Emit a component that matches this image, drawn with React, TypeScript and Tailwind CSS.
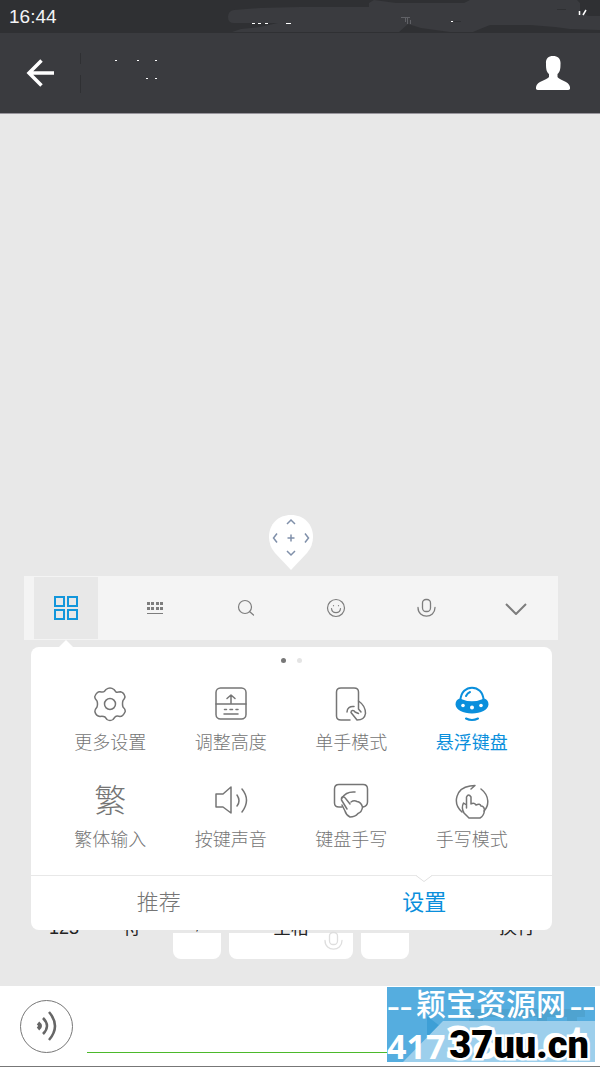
import React, { useState } from 'react';

interface IconProps {
  className?: string;
}

const stroke = {
  fill: 'none',
  stroke: 'currentColor',
  strokeWidth: 1.5,
  strokeLinecap: 'round' as const,
  strokeLinejoin: 'round' as const,
};

const GridIcon = () => (
  <svg className="h-6 w-6" viewBox="0 0 24 24" fill="none" stroke="currentColor" strokeWidth={2}>
    <path d="M1 1h9v9H1zM14 1h9v9h-9zM1 14h9v9H1zM14 14h9v9h-9z" />
  </svg>
);

const KeyboardIcon = () => (
  <svg className="h-6 w-6" viewBox="0 0 24 24" fill="currentColor">
    <path d="M3 6h3v3H3zM7 6h3v3H7zM12 6h3v3h-3zM16 6h3v3h-3zM3 11h3v3H3zM7 11h3v3H7zM12 11h3v3h-3zM16 11h3v3h-3zM3 17h16v1H3z" />
  </svg>
);

const SearchIcon = () => (
  <svg className="h-6 w-6" viewBox="0 0 24 24" {...stroke} strokeWidth={1.2}>
    <circle cx="11" cy="11" r="6.5" />
    <path d="m15.5 15.5 4 3.5" />
  </svg>
);

const SmileIcon = () => (
  <svg className="h-6 w-6" viewBox="0 0 24 24" {...stroke} strokeWidth={1.2}>
    <circle cx="12" cy="12" r="8.5" />
    <path d="M7.5 12.500c.5 5.500 8.500 5.500 9 0" />
    <path d="M9.500 9.500v.2M14.500 9.500v.2" />
  </svg>
);

const MicIcon = ({ className = 'h-6 w-6' }: IconProps) => (
  <svg className={className} viewBox="0 0 24 24" {...stroke} strokeWidth={1.3}>
    <rect x="8.5" y="3.5" width="8" height="12" rx="3.5" />
    <path d="M4 11.500C4 23 21 23 21 11.500" />
  </svg>
);

const ChevronIcon = () => (
  <svg className="h-6 w-6" viewBox="0 0 24 24" {...stroke} strokeWidth={2} strokeLinecap="butt">
    <path d="m2 8 10 10L22 8" />
  </svg>
);

const GearIcon = () => (
  <svg className="h-9 w-9" viewBox="0 0 36 36" {...stroke}>
    <path d="M14 3.500Q18 .500 22 3.500L24 6Q25 6.500 28.500 5.800Q32 6.500 33 11Q32.500 13 31 14.500Q30 18 31 21Q34 24 33 26Q31 30.500 28 30.500Q24.500 29.500 23 31L21 33.500Q18 35.500 15 33.500L13 31Q11 30 8 30.500Q4 30 3 26Q2.500 24 5 21Q6 18 5 15Q2 12 3 10Q5 5.500 8 5.800Q11.500 6.500 12.500 5.200Z" />
    <circle cx="18" cy="18" r="5.500" />
  </svg>
);

const HeightIcon = () => (
  <svg className="h-9 w-9" viewBox="0 0 36 36" {...stroke}>
    <rect x="3" y="2" width="30" height="31" rx="4.500" />
    <path d="M3 18h30M18 17V9M14 12.500 18 9l4 3.500" />
    <path d="M11.500 23.500h2M17 23.500h2.500M23 23.500h2M11 28h14" />
  </svg>
);

const OneHandIcon = () => (
  <svg className="h-9 w-9" viewBox="0 0 36 36" {...stroke}>
    <path d="M17 34H8Q3.500 34 3.500 30V6Q3.500 2 8 2H21Q25.500 2 25.500 6V15C30 18 32.500 23 32.500 27.500C32 31 30 34 24 34L18 26.500C18 24 21 24 22 26L25.500 27.500" />
    <path d="M14 26C14 22 17 20 21 20.500M25.500 15V23L28 26" />
  </svg>
);

const UfoIcon = () => (
  <svg className="h-9 w-9" viewBox="0 0 36 36">
    <path d="M6.500 14C7 -2.500 29 -2.500 29.500 14" {...stroke} strokeWidth={2} />
    <path d="M12 10Q13.500 7 16 6" {...stroke} strokeWidth={2} />
    <path d="M5.500 12.500Q1.500 14 1.500 18.500C2 24 9 27.500 18 27.500S34 24 34.500 18.500Q34.500 14 30.500 12.500Q18 18 5.500 12.500Z" fill="currentColor" />
    <g fill="white">
      <circle cx="9" cy="19.500" r="1.800" />
      <circle cx="18" cy="21.500" r="2" />
      <circle cx="27" cy="19.500" r="1.800" />
    </g>
    <path d="M12 32.500Q18 35.500 24 32.500" {...stroke} strokeWidth={2} />
  </svg>
);

const TraditionalIcon = () => <span className="h-9 text-[32px] leading-9">繁</span>;

const SoundIcon = () => (
  <svg className="h-9 w-9" viewBox="0 0 36 36" {...stroke}>
    <path d="M3 11h7l8-7v26l-8-6H3z" />
    <path d="M24 12Q28 18 24 23M29 6Q38 17 29 29" />
  </svg>
);

const HandwriteIcon = () => (
  <svg className="h-9 w-9" viewBox="0 0 36 36" {...stroke}>
    <path d="M9 24H6Q1.500 24 1.500 20V6Q1.500 1.500 6 1.500H30Q34.500 1.500 34.500 6V19Q34.500 23 30 24" />
    <path d="M9 15C12 10 16 8.500 22 9" />
    <path d="M14 26 8.500 17C8 13 11 12.500 13 16L17 21M18 19Q21 17 24 18.500Q28 19 29.500 24Q29 29 25 30.500Q22 34 17 34Q13 32 12 28L9 22" />
  </svg>
);

const HandModeIcon = () => (
  <svg className="h-9 w-9" viewBox="0 0 36 36" {...stroke}>
    <path d="M8 29C-2 20 2 5 16 3L21 2.500 17 6M27 6C36 13 35 23 30 28" />
    <path d="M12.500 25V14Q14.500 10 17 14V21Q20 19 22 22Q26 20 27 23Q30 23 30.500 27Q30 33 26 35H15L10 30Q7 25 9.500 20L12.500 22" />
  </svg>
);

const tools = [
  { id: 'menu', label: '菜单', Icon: GridIcon },
  { id: 'keyboard', label: '键盘', Icon: KeyboardIcon },
  { id: 'search', label: '搜索', Icon: SearchIcon },
  { id: 'emoji', label: '表情', Icon: SmileIcon },
  { id: 'voice', label: '语音', Icon: MicIcon },
  { id: 'hide', label: '收起', Icon: ChevronIcon },
];

const options = [
  { label: '更多设置', Icon: GearIcon },
  { label: '调整高度', Icon: HeightIcon },
  { label: '单手模式', Icon: OneHandIcon },
  { label: '悬浮键盘', Icon: UfoIcon },
  { label: '繁体输入', Icon: TraditionalIcon },
  { label: '按键声音', Icon: SoundIcon },
  { label: '键盘手写', Icon: HandwriteIcon },
  { label: '手写模式', Icon: HandModeIcon },
];

function Header() {
  return (
    <header className="bg-[#3a3b3f] text-white">
      <div className="relative flex h-[33px] items-center bg-[#2f3033] px-[9px]">
        <time className="text-[19px] leading-6 text-gray-100">16:44</time>
        <svg className="absolute top-0 right-0 h-[33px] w-[380px]" viewBox="220 0 380 33" aria-hidden="true">
          <path
            d="M234 10L260 8L300 7H369V3L374 0L396 3H464L470 0H577L580 3V12L588 16H600V30L570 29L555 27L530 25H490L480 29L473 32H450L421 28L408 24L399 32H232L241 29L260 27L278 23H234Q228 23 228 17Q228 11 234 10Z"
            fill="#3a3b3f"
          />
          <path d="M252 23.500h3M258 23.500h3M265 23.500h3M286 23.500h5M451 21.500h2" stroke="white" />
          <path d="M454 21.500h7M557 9.500h9" stroke="#2f3033" />
          <path d="M401 17.500h9M405.500 18v4M407.500 18v6M410.500 20v4" stroke="#606166" />
          <path d="M579.500 11v4M583 15l3-5" stroke="white" strokeWidth="1.500" />
        </svg>
      </div>

      <div className="flex h-[81px] items-center border-b border-[#98959c] pr-[30px] pl-[26px]">
        <button aria-label="返回">
          <svg className="h-7 w-7" viewBox="0 0 28 28" fill="none" stroke="currentColor" strokeWidth={3.5}>
            <path d="M28 14H3M15.500 1.500 3 14l12.500 12.500" />
          </svg>
        </button>
        <svg className="ml-[26px] h-10 w-20" viewBox="0 0 80 40" aria-hidden="true">
          <path d="M.5 0v11M.5 22v18" stroke="#2f3033" />
          <path d="M35 7.500h2M57 7.500h2M75 7.500h2M66 25.500h2M75 25.500h2" stroke="white" />
        </svg>
        <button className="ml-auto" aria-label="个人资料">
          <svg className="h-[34px] w-[34px]" viewBox="0 0 34 34" fill="currentColor">
            <path d="M17 0C22 0 25 3 24.500 8C24.500 13 24 16 21.500 18V21C23 24 33 25 34 31Q34.500 34 32 34H2Q-.5 34 0 31C1 25 11 24 13 21V18C10.500 16 10 13 10 8C9.500 3 12 0 17 0Z" />
          </svg>
        </button>
      </div>
    </header>
  );
}

function DragHandle() {
  return (
    <button className="mx-auto block" aria-label="移动键盘">
      <svg className="h-14 w-[46px]" viewBox="0 0 46 56">
        <path d="M23 55 7 38Q1 31 1 22C1 9 10 0 23 0S45 9 45 22Q45 31 39 38Z" fill="white" />
        <g fill="none" stroke="#8090aa" strokeWidth={1.5}>
          <path d="m19 9 4-4 4 4M19 36l4 4 4-4M9 18.500 5.500 23 9 27.500M37 18.500l3.500 4.500-3.500 4.500M19.500 23h7M23 19.500v7" />
        </g>
      </svg>
    </button>
  );
}

function Toolbar() {
  const [active, setActive] = useState('menu');

  return (
    <nav className="flex h-16 items-stretch justify-between bg-[#f4f4f4] px-[10px] py-px">
      {tools.map(({ id, label, Icon }) => (
        <button
          key={id}
          aria-label={label}
          onClick={() => setActive(id)}
          className={`relative flex w-16 items-center justify-center ${active === id ? 'bg-[#e8e8e8] text-[#1296db]' : 'text-[#7d7d7d]'}`}
        >
          <Icon />
          {active === id && (
            <svg className="absolute -bottom-2 left-[25px] h-[7px] w-3.5" viewBox="0 0 14 7" fill="white">
              <path d="M0 7 7 0l7 7z" />
            </svg>
          )}
        </button>
      ))}
    </nav>
  );
}

function SettingsPanel() {
  const [selected, setSelected] = useState('悬浮键盘');
  const [tab, setTab] = useState('设置');

  return (
    <section className="mt-[7px] mr-[6px] ml-[7px] rounded-lg bg-white">
      <div className="flex justify-center gap-[11px] pt-[11px]">
        <span className="h-[5px] w-[5px] rounded-full bg-[#777]" />
        <span className="h-[5px] w-[5px] rounded-full bg-[#e4e4e4]" />
      </div>

      <div className="grid grid-cols-4 gap-y-[30px] pt-[23px] pr-5 pb-[25px] pl-[19px]">
        {options.map(({ label, Icon }) => (
          <button
            key={label}
            onClick={() => setSelected(label)}
            className={`flex flex-col items-center gap-[11px] ${selected === label ? 'text-[#0a8fdc]' : 'font-light text-[#757575]'}`}
          >
            <Icon />
            <span className="text-[18px] leading-5">{label}</span>
          </button>
        ))}
      </div>

      <div className="flex justify-between border-t border-[#e8e8e8]">
        {['推荐', '设置'].map((name) => (
          <button
            key={name}
            onClick={() => setTab(name)}
            className={`relative h-[54px] w-[49%] text-[22px] leading-6 ${tab === name ? 'text-[#0a8fdc]' : 'font-light text-[#757575]'}`}
          >
            {name}
            {tab === name && (
              <svg className="absolute -top-px left-1/2 h-2 w-4 -translate-x-1/2" viewBox="0 0 16 8">
                <path d="M0 0h16L8 6z" fill="white" />
                <path d="m0 .5 8 6 8-6" fill="none" stroke="#e0e0e0" />
              </svg>
            )}
          </button>
        ))}
      </div>
    </section>
  );
}

// Bottom row of the keyboard, mostly hidden behind the settings panel
function KeyRow() {
  const whiteKey = 'relative h-[29px] rounded-b-lg border-t-[3px] border-[#e8e8e8] bg-white';

  return (
    <div className="grid h-[29px] grid-cols-[54px_66px_48px_124px_48px_1fr] gap-2 overflow-hidden pl-[13px] text-[18px] leading-5 text-[#222]">
      <button className="-mt-3 h-5">123</button>
      <button className="-mt-3 h-5">符</button>
      <button className={whiteKey}>
        <span className="absolute -top-[20px] left-0 w-full">,</span>
      </button>
      <button className={whiteKey}>
        <span className="absolute -top-[15px] left-0 w-full">空格</span>
        <MicIcon className="absolute -top-1 right-2 h-6 w-6 text-[#dedede]" />
      </button>
      <button className={whiteKey} aria-label="句号" />
      <button className="-mt-3 h-5 pr-[23px] text-right">换行</button>
    </div>
  );
}

function Watermark() {
  return (
    <div className="absolute right-[5px] bottom-[4px] h-[75px] w-[208px] overflow-hidden bg-[#55addf] whitespace-nowrap text-white">
      <svg className="absolute inset-0 h-full w-full" viewBox="0 0 208 75" aria-hidden="true">
        <path d="M40 29 58 43 40 53z" fill="#3d9fd6" />
        <path d="M82 22h14v26H82zM100 22h98v8h-98zM150 30h10v14h-10zM180 30h10v14h-10z" fill="#4fa3d0" />
        <path d="M16 75 56 34H208V75z" fill="#9dcfec" />
      </svg>
      <div className="relative flex h-9 items-center justify-between font-['Liberation_Serif','Noto_Sans_CJK_SC',serif] text-[30px] leading-8 font-medium">
        <span className="text-[38px]">--</span>
        <span>颖宝资源网</span>
        <span className="text-[38px]">--</span>
      </div>
      <div className="absolute bottom-0 left-0 font-['Open_Sans',sans-serif] text-[34px] leading-8 font-bold">
        417<span className="text-[46px]">38.net</span>
      </div>
      <strong className="absolute right-[6px] bottom-px font-[Roboto,sans-serif] text-[38px] leading-8 font-black text-black [-webkit-text-stroke:5px_white] [paint-order:stroke_fill]">
        37uu.cn
      </strong>
    </div>
  );
}

function MessageBar() {
  return (
    <footer className="relative flex h-[81px] items-center border-b border-[#777] bg-white pr-5 pl-5">
      <button className="flex h-[53px] w-[53px] items-center justify-center rounded-full border border-[#777] text-[#666]" aria-label="语音消息">
        <svg className="h-9 w-9" viewBox="0 0 36 36" fill="none" stroke="currentColor" strokeWidth={2.5}>
          <path d="M9 15Q13 18 9 21" strokeWidth={4} />
          <path d="M14 10Q22 18 14 26M20 4Q32 18 20 32" />
        </svg>
      </button>
      <input className="mt-[11px] ml-[14px] h-[42px] flex-1 border-b border-[#4cb92b] bg-transparent outline-none" aria-label="消息" />
      <Watermark />
    </footer>
  );
}

export default function App() {
  return (
    <div className="flex min-h-screen flex-col bg-[#e8e8e8] font-['Liberation_Sans','Noto_Sans_CJK_SC',sans-serif]">
      <Header />
      <main className="flex flex-1 flex-col justify-end pr-[42px] pb-[27px] pl-6">
        <div className="mb-[5px]">
          <DragHandle />
        </div>
        <Toolbar />
        <SettingsPanel />
        <KeyRow />
      </main>
      <MessageBar />
    </div>
  );
}
